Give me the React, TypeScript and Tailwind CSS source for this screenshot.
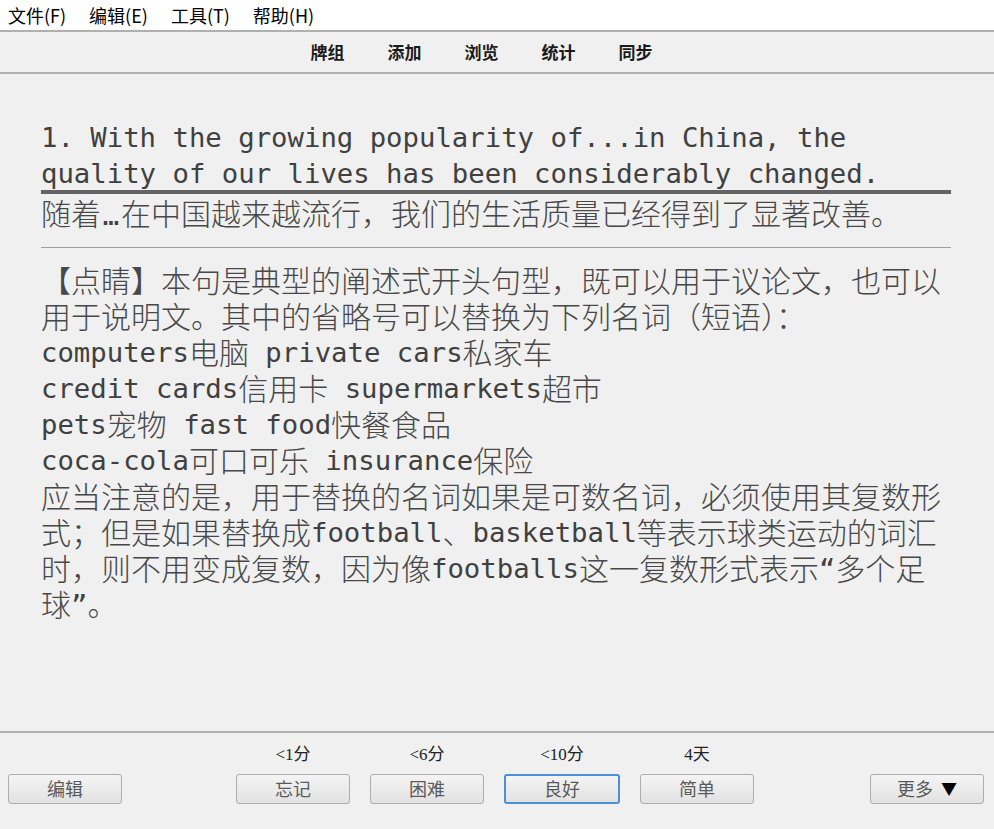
import React from "react";

const isMono = (ch: string) => ch.charCodeAt(0) < 0x2e80;

function Line({ text }: { text: string }) {
  const runs: { mono: boolean; s: string }[] = [];
  for (const ch of Array.from(text)) {
    const m = isMono(ch);
    const last = runs[runs.length - 1];
    if (last && last.mono === m && ch !== "…" && !last.s.endsWith("…")) last.s += ch;
    else runs.push({ mono: m, s: ch });
  }
  return (
    <div className="h-[36px] leading-[36px] whitespace-pre text-[30px] font-['Noto_Sans_CJK_SC',sans-serif] font-light text-[#484848]">
      {runs.map((r, i) =>
        r.s === "…" ? (
          <span key={i} className="inline-block w-[20px] text-center leading-[36px] font-['DejaVu_Sans_Mono',monospace] font-normal text-[27.3px] text-[#404040]">
            …
          </span>
        ) : r.mono ? (
          <span key={i} className="leading-[36px] align-[2px] font-['DejaVu_Sans_Mono',monospace] font-normal text-[27.3px] text-[#404040]">
            {r.s}
          </span>
        ) : (
          <span key={i} className="leading-[36px]">
            {r.s}
          </span>
        )
      )}
    </div>
  );
}

function Btn({ label, focused, arrow }: { label: string; focused?: boolean; arrow?: boolean }) {
  return (
    <div
      className={
        "h-[30px] pb-[3px] flex items-center justify-center rounded-[3px] bg-gradient-to-b from-[#f4f4f4] to-[#e2e2e2] text-[18px] text-[#5a5a5a] font-['Noto_Sans_CJK_SC',sans-serif] " +
        (focused ? "w-[116px] border-2 border-[#4a90d9]" : "w-[114px] border border-[#adadad]")
      }
    >
      <span className="leading-[24px]">{label}</span>
      {arrow && <span className="ml-[8px] text-[16px] leading-[24px] text-black">▼</span>}
    </div>
  );
}

function Col({ top, label, focused }: { top: string; label: string; focused?: boolean }) {
  return (
    <div className="flex flex-col items-center">
      <div className="h-[41px] pt-[12px] leading-[20px] text-[17px] text-[#222] font-['Liberation_Serif','Noto_Sans_CJK_SC',serif]">
        {top}
      </div>
      <Btn label={label} focused={focused} />
    </div>
  );
}

export default function App() {
  const menus = ["文件(F)", "编辑(E)", "工具(T)", "帮助(H)"];
  const tools = ["牌组", "添加", "浏览", "统计", "同步"];
  const para = [
    "【点睛】本句是典型的阐述式开头句型，既可以用于议论文，也可以",
    "用于说明文。其中的省略号可以替换为下列名词（短语）：",
    "computers电脑 private cars私家车",
    "credit cards信用卡 supermarkets超市",
    "pets宠物 fast food快餐食品",
    "coca-cola可口可乐 insurance保险",
    "应当注意的是，用于替换的名词如果是可数名词，必须使用其复数形",
    "式；但是如果替换成football、basketball等表示球类运动的词汇",
    "时，则不用变成复数，因为像footballs这一复数形式表示“多个足",
    "球”。",
  ];
  return (
    <div className="w-[994px] h-[829px] bg-[#f0f0f0] flex flex-col overflow-hidden">
      <div className="h-[30px] bg-white flex items-center pl-[8px] gap-[23px] text-[18px] leading-[28px] text-black font-['Noto_Sans_CJK_SC',sans-serif]">
        {menus.map((m) => (
          <span key={m}>{m}</span>
        ))}
      </div>
      <div className="h-[44px] border-t-2 border-b-2 border-[#b0b0b0] flex items-center pl-[310px] gap-[42px] text-[17px] font-bold text-[#1a1a1a] font-['Noto_Sans_CJK_SC',sans-serif]">
        {tools.map((t) => (
          <span key={t} className="w-[35px] text-center">
            {t}
          </span>
        ))}
      </div>
      <div className="flex-1 pl-[41px] pr-[43px] pt-[44px]">
        <Line text="1. With the growing popularity of...in China, the" />
        <Line text="quality of our lives has been considerably changed." />
        <div className="h-[4px] bg-[#646464]" />
        <Line text="随着…在中国越来越流行，我们的生活质量已经得到了显著改善。" />
        <div className="h-[1px] bg-[#a0a0a0] mt-[17px] mb-[13px]" />
        {para.map((p, i) => (
          <Line key={i} text={p} />
        ))}
      </div>
      <div className="h-[98px] border-t-2 border-[#b0b0b0] flex items-start pl-[8px] pr-[10px]">
        <Col top="" label="编辑" />
        <div className="flex gap-[20px] ml-[114px]">
          <Col top="<1分" label="忘记" />
          <Col top="<6分" label="困难" />
          <Col top="<10分" label="良好" focused />
          <Col top="4天" label="简单" />
        </div>
        <div className="flex-1" />
        <div className="flex flex-col">
          <div className="h-[41px]" />
          <Btn label="更多" arrow />
        </div>
      </div>
    </div>
  );
}
